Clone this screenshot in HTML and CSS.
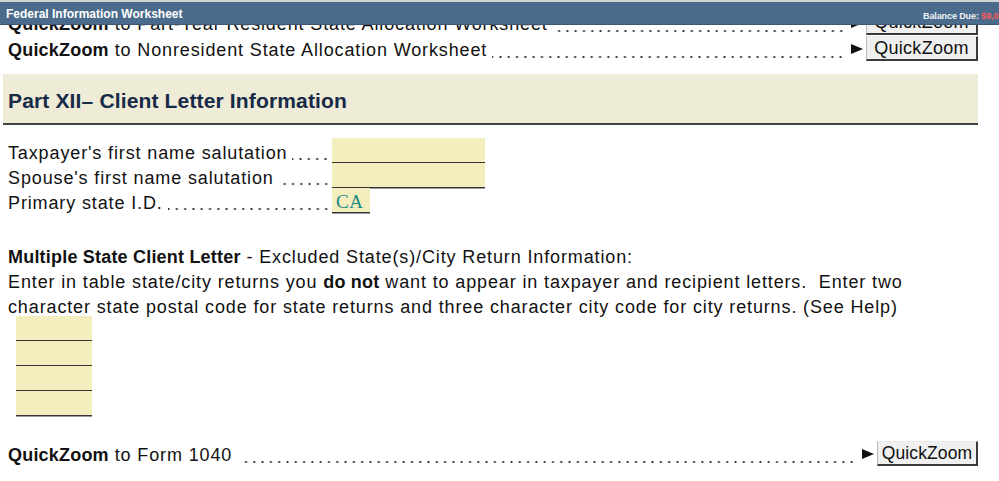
FILE: index.html
```html
<!DOCTYPE html>
<html>
<head>
<meta charset="utf-8">
<link rel="stylesheet" href="styles.css">
</head>
<body>
<div class="titlebar">
  <span class="tb-title">Federal Information Worksheet</span>
  <span class="tb-spacer"></span>
  <span class="tb-balance">Balance Due: <span class="tb-amount">$9,000</span></span>
</div>
<main class="page">
  <div class="qz-row">
    <span class="qz-label"><b>QuickZoom</b> to Part-Year Resident State Allocation Worksheet</span>
    <span class="leader"></span>
    <svg class="arrow" width="12" height="10" viewBox="0 0 12 10"><polygon points="0,0 12,5 0,10" fill="#111"/></svg>
    <button class="qz-btn">QuickZoom</button>
  </div>
  <div class="qz-row">
    <span class="qz-label"><b>QuickZoom</b> to Nonresident State Allocation Worksheet</span>
    <span class="leader"></span>
    <svg class="arrow" width="12" height="10" viewBox="0 0 12 10"><polygon points="0,0 12,5 0,10" fill="#111"/></svg>
    <button class="qz-btn">QuickZoom</button>
  </div>

  <h2 class="part-header">Part XII&ndash; Client Letter Information</h2>

  <div class="fields">
    <div class="field">
      <span class="field-label"><span>Taxpayer's first name salutation</span><span class="leader"></span></span>
      <span class="input wide"></span>
    </div>
    <div class="field">
      <span class="field-label"><span>Spouse's first name salutation</span><span class="leader"></span></span>
      <span class="input wide shade"></span>
    </div>
    <div class="field">
      <span class="field-label"><span>Primary state I.D.</span><span class="leader"></span></span>
      <span class="input short shade">CA</span>
    </div>
  </div>

  <p class="info"><b>Multiple State Client Letter</b> - Excluded State(s)/City Return Information:<br>Enter in table state/city returns you <b>do not</b> want to appear in taxpayer and recipient letters.&nbsp; Enter two<br>character state postal code for state returns and three character city code for city returns. (See Help)</p>

  <div class="cells">
    <span class="cell shade"></span>
    <span class="cell"></span>
    <span class="cell shade"></span>
    <span class="cell shade"></span>
  </div>

  <div class="qz-row bottom">
    <span class="qz-label"><b>QuickZoom</b> to Form 1040</span>
    <span class="leader"></span>
    <svg class="arrow" width="12" height="10" viewBox="0 0 12 10"><polygon points="0,0 12,5 0,10" fill="#111"/></svg>
    <button class="qz-btn small">QuickZoom</button>
  </div>
</main>
</body>
</html>
```
FILE: styles.css
```css
html, body {
  margin: 0;
  padding: 0;
  background: #ffffff;
}
body {
  font-family: "Liberation Sans", Arial, sans-serif;
  font-size: 18px;
  letter-spacing: 0.87px;
  color: #111111;
  width: 999px;
  height: 481px;
  overflow: hidden;
  position: relative;
}
b {
  letter-spacing: 0.2px;
}
.titlebar {
  position: absolute;
  top: 0;
  left: 0;
  right: 0;
  height: 22px;
  border-top: 2px solid #d4d4d4;
  background: #4a6b8b;
  border-bottom: 1px solid #3d5874;
  display: flex;
  align-items: center;
  color: #ffffff;
  z-index: 5;
  overflow: hidden;
  letter-spacing: 0;
}
.tb-title {
  font-size: 12px;
  font-weight: bold;
  padding-left: 6px;
  padding-top: 1px;
}
.tb-spacer {
  flex: 1;
}
.tb-balance {
  width: 76px;
  white-space: nowrap;
  overflow: hidden;
  font-size: 9px;
  letter-spacing: -0.1px;
  font-weight: bold;
  padding-top: 5px;
  color: #eef2f6;
}
.tb-amount {
  color: #ff5a5a;
}
.page {
  padding: 9px 21px 0 3px;
}
.qz-row {
  display: flex;
  align-items: center;
  height: 26px;
  margin-left: 5px;
}
.qz-label {
  white-space: nowrap;
  padding-top: 5px;
}
.leader {
  flex: 1;
  align-self: stretch;
  background-image: radial-gradient(circle, #333 0.8px, transparent 1.3px);
  background-size: 8.3px 4px;
  background-repeat: repeat-x;
  background-position: right 1px bottom 2px;
  margin: 0 5px 0 5px;
}
.arrow {
  flex: none;
  margin: 2px 3px 0 0;
}
.qz-btn {
  font-family: "Liberation Sans", Arial, sans-serif;
  font-size: 18px;
  letter-spacing: 0.3px;
  color: #111;
  height: 25px;
  width: 112px;
  padding: 0;
  background: #f0f0f0;
  border-style: solid;
  border-width: 1px 2px 2px 1px;
  border-color: #e8e8e8 #3a3a3a #3a3a3a #b8b8b8;
  line-height: 20px;
  margin-top: 1px;
}
.qz-btn.small {
  width: 101px;
  font-size: 17.5px;
  letter-spacing: 0.1px;
}
.part-header {
  margin: 13px 0 0 0;
  height: 44px;
  padding: 5px 0 0 5px;
  background: #eeebd6;
  border-bottom: 2px solid #444444;
  display: flex;
  align-items: center;
  font-size: 21px;
  font-weight: bold;
  letter-spacing: 0.15px;
  color: #172a48;
}
.fields {
  margin: 13px 0 0 5px;
  display: flex;
  flex-direction: column;
}
.field {
  display: flex;
  height: 25px;
}
.field-label {
  width: 324px;
  display: flex;
  align-items: center;
  white-space: nowrap;
  padding-top: 5px;
  box-sizing: border-box;
}
.field-label .leader {
  margin: 0 2px 0 5px;
  background-position: right 0 bottom 2px;
}
.input {
  box-sizing: border-box;
  height: 25px;
  background: #f4edbd;
  border-bottom: 1px solid #333333;
  font-family: "Liberation Serif", "Times New Roman", serif;
  font-size: 19px;
  letter-spacing: 0.5px;
  color: #1b8a84;
  padding: 3px 0 0 4px;
}
.input.shade {
  box-shadow: 0 1px 0 #9a9a9a;
}
.input.wide {
  width: 153px;
}
.input.short {
  width: 38px;
}
.info {
  margin: 32px 0 0 5px;
  line-height: 25px;
  white-space: nowrap;
}
.cells {
  margin: -4px 0 0 13px;
  display: flex;
  flex-direction: column;
  width: 76px;
}
.cell {
  box-sizing: border-box;
  height: 25px;
  background: #f4edbd;
  border-bottom: 1px solid #333333;
}
.cell.shade {
  box-shadow: 0 1px 0 #9a9a9a;
}
.qz-row.bottom {
  margin-top: 24px;
}
.qz-row.bottom .leader {
  margin-left: 8px;
  margin-right: 5px;
}
```
